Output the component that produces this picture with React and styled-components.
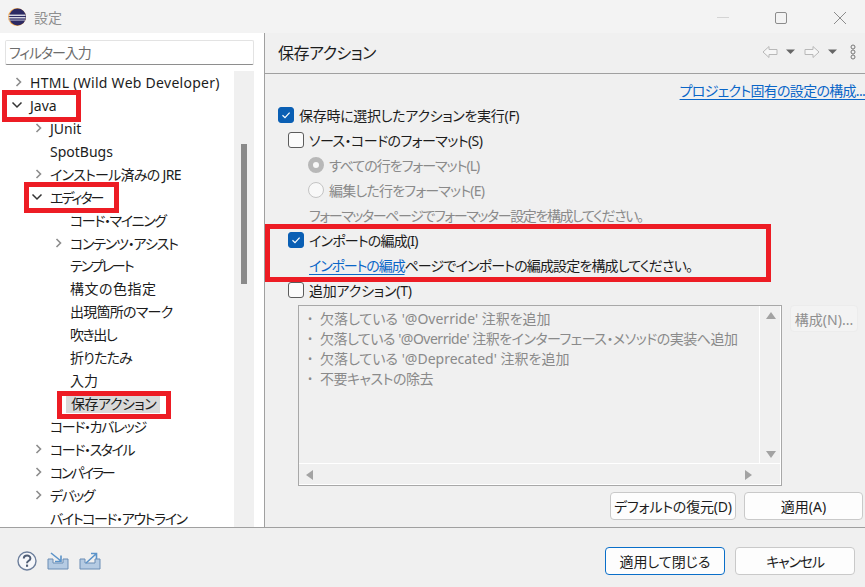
import React from 'react'
import styled, { createGlobalStyle } from 'styled-components'

const GlobalStyle = createGlobalStyle`
  html, body { margin: 0; padding: 0; }
  body {
    width: 865px;
    height: 587px;
    overflow: hidden;
    background: #f0f0f0;
    font-family: "Noto Sans", "Noto Sans CJK JP", sans-serif;
    font-size: 14px;
    font-feature-settings: "palt";
    color: #1c1c1c;
  }
`

const treeItems = [
  { label: 'HTML (Wild Web Developer)', level: 0, arrow: 'right', spacing: 0.28 },
  { label: 'Java', level: 0, arrow: 'down' },
  { label: 'JUnit', level: 1, arrow: 'right' },
  { label: 'SpotBugs', level: 1 },
  { label: 'インストール済みの JRE', level: 1, arrow: 'right', spacing: -0.7 },
  { label: 'エディター', level: 1, arrow: 'down', spacing: -2 },
  { label: 'コード・マイニング', level: 2, spacing: -1.4 },
  { label: 'コンテンツ・アシスト', level: 2, arrow: 'right', spacing: -1.2 },
  { label: 'テンプレート', level: 2, spacing: -2 },
  { label: '構文の色指定', level: 2, spacing: 0.5 },
  { label: '出現箇所のマーク', level: 2, spacing: -0.75 },
  { label: '吹き出し', level: 2, spacing: -1.5 },
  { label: '折りたたみ', level: 2, spacing: -0.8 },
  { label: '入力', level: 2 },
  { label: '保存アクション', level: 2, selected: true, spacing: -0.5 },
  { label: 'コード・カバレッジ', level: 1, spacing: -1.4 },
  { label: 'コード・スタイル', level: 1, arrow: 'right', spacing: -1.4 },
  { label: 'コンパイラー', level: 1, arrow: 'right', spacing: -2.3 },
  { label: 'デバッグ', level: 1, arrow: 'right', spacing: -1.5 },
  { label: 'バイトコード・アウトライン', level: 1, spacing: -1.4 },
]

const actionItems = [
  { text: "欠落している '@Override' 注釈を追加" },
  { text: "欠落している '@Override' 注釈をインターフェース・メソッドの実装へ追加", spacing: -0.5 },
  { text: "欠落している '@Deprecated' 注釈を追加" },
  { text: '不要キャストの除去', spacing: -0.5 },
]

const Window = styled.div`
  position: relative;
  width: 865px;
  height: 587px;
  display: flex;
  flex-direction: column;
  overflow: hidden;
`

const TitleBar = styled.div`
  height: 33px;
  flex: none;
  display: flex;
  align-items: center;
  padding-left: 8px;
  background: #f3f3f3;
`

const TitleText = styled.span`
  margin-left: 8px;
  font-size: 14px;
  color: #8f8f8f;
`

const WindowButtons = styled.div`
  margin-left: auto;
  display: flex;
  align-items: center;
`

const WindowButton = styled.svg`
  width: 58px;
  height: 24px;
  display: block;
`

const Main = styled.div`
  height: 494px;
  flex: none;
  display: flex;
  border-bottom: 1px solid #a0a0a0;
`

const Sidebar = styled.div`
  width: 265px;
  flex: none;
  background: #fff;
  border-right: 1px solid #a0a0a0;
  padding: 7px 10px 0 5px;
  box-sizing: border-box;
  display: flex;
  flex-direction: column;
  overflow: hidden;
`

const Filter = styled.div`
  height: 25px;
  flex: none;
  box-sizing: border-box;
  border: 1px solid #e3e3e3;
  border-bottom: 1px solid #8e8e8e;
  border-radius: 2px;
  padding-left: 3px;
  line-height: 23px;
  letter-spacing: -1.1px;
  color: #6d6d6d;
`

const TreeWrap = styled.div`
  margin-top: 6px;
  flex: 1;
  min-height: 0;
  display: flex;
  margin-left: -5px;
`

const Tree = styled.div`
  width: 234px;
  flex: none;
  overflow: hidden;
`

const TreeRow = styled.div`
  height: 22.95px;
  display: flex;
  align-items: center;
  padding-left: ${p => 11 + p.$level * 20}px;
  white-space: nowrap;
`

const ArrowSlot = styled.span`
  width: 19px;
  height: 14px;
  flex: none;
  display: flex;
  align-items: center;
`

const TreeLabel = styled.span`
  padding: ${p => (p.$selected ? '0 4px 0 5px' : '0')};
  margin-left: ${p => (p.$selected ? '-4px' : '0')};
  background: ${p => (p.$selected ? '#d9d9d9' : 'transparent')};
  letter-spacing: ${p => p.$spacing || 0}px;
  line-height: 19px;
`

const ScrollTrack = styled.div`
  width: 20px;
  flex: none;
  background: #f0f0f0;
  padding-top: 73px;
  display: flex;
  justify-content: center;
`

const ScrollThumb = styled.div`
  width: 6px;
  height: 140px;
  background: #8a8a8a;
`

const Content = styled.div`
  flex: 1;
  min-width: 0;
  display: flex;
  flex-direction: column;
`

const PageHeader = styled.div`
  height: 41px;
  flex: none;
  box-sizing: border-box;
  border-bottom: 1px solid #a0a0a0;
  display: flex;
  align-items: center;
  padding: 0 0 2px 13px;
  font-size: 16px;
  letter-spacing: -0.5px;
`

const NavIcons = styled.svg`
  margin-left: auto;
  width: 102px;
  height: 16px;
  display: block;
`

const LinkRow = styled.div`
  height: 26px;
  display: flex;
  align-items: flex-end;
  justify-content: flex-end;
  white-space: nowrap;
`

const Link = styled.span`
  color: #0a66c8;
  text-decoration: underline;
  text-underline-offset: 3px;
  text-decoration-thickness: 1px;
  letter-spacing: ${p => p.$spacing || 0}px;
`

const Form = styled.div`
  padding: 0 0 0 13px;
  margin-top: 2px;
`

const Row = styled.div`
  height: 25px;
  display: flex;
  align-items: center;
  gap: 5px;
  padding-left: ${p => p.$indent || 0}px;
  white-space: nowrap;
  letter-spacing: ${p => p.$spacing || 0}px;
  color: ${p => (p.$disabled ? '#8a8a8a' : '#1c1c1c')};
`

const Check = styled.span`
  width: 16px;
  height: 16px;
  box-sizing: border-box;
  flex: none;
  border-radius: 3px;
  border: 1px solid ${p => (p.$checked ? '#0a5fb4' : '#5c5c5c')};
  background: ${p => (p.$checked ? '#0a5fb4' : '#fbfbfb')};
  display: flex;
  align-items: center;
  justify-content: center;
`

const Radio = styled.span`
  width: 16px;
  height: 16px;
  box-sizing: border-box;
  flex: none;
  border-radius: 50%;
  border: ${p => (p.$checked ? '5px solid #b8b8b8' : '1px solid #c4c4c4')};
  background: #f8f8f8;
`

const ActionsArea = styled.div`
  display: flex;
  align-items: flex-start;
  gap: 8px;
  margin: 3px 0 0 20px;
`

const ActionsBox = styled.div`
  width: 484px;
  height: 181px;
  box-sizing: border-box;
  border: 1px solid #a8a8a8;
  display: grid;
  grid-template-columns: 1fr 21px;
  grid-template-rows: 1fr 21px;
  box-shadow: inset -1px -1px 0 #fff;
`

const ActionList = styled.ul`
  margin: 0;
  padding: 3px 0 0 9px;
  list-style: none;
  border-right: 1px solid #fff;
  border-bottom: 1px solid #fff;
  color: #8a8a8a;
  overflow: hidden;
`

const ActionItem = styled.li`
  height: 20px;
  line-height: 20px;
  display: flex;
  white-space: nowrap;
  letter-spacing: ${p => p.$spacing || 0}px;
  &::before {
    content: '•';
    width: 12px;
    flex: none;
    font-size: 11px;
  }
`

const VScroll = styled.div`
  display: flex;
  flex-direction: column;
  justify-content: space-between;
  align-items: center;
  padding: 5px 0 4px;
  border-bottom: 1px solid #fff;
`

const HScroll = styled.div`
  display: flex;
  justify-content: space-between;
  align-items: center;
  padding: 0 7px 0 6px;
`

const ScrollGlyph = styled.svg`
  width: 10px;
  height: 10px;
  display: block;
  fill: #a3a3a3;
`

const Button = styled.button`
  box-sizing: border-box;
  height: ${p => p.$height || 28}px;
  width: ${p => p.$width}px;
  flex: none;
  font: inherit;
  font-feature-settings: inherit;
  padding: 0;
  border-radius: 4px;
  letter-spacing: ${p => p.$spacing || 0}px;
  background: ${p => (p.disabled ? '#f3f3f3' : '#fdfdfd')};
  color: ${p => (p.disabled ? '#8f8f8f' : '#1c1c1c')};
  border: 1px solid ${p => (p.$primary ? '#0a6fc9' : p.disabled ? '#ececec' : '#c9c9c9')};
  border-width: ${p => (p.$primary ? '1.5px' : '1px')};
  white-space: nowrap;
`

const RestoreRow = styled.div`
  display: flex;
  justify-content: flex-end;
  gap: 8px;
  margin: 6px 2px 0 0;
`

const Footer = styled.div`
  flex: 1;
  display: flex;
  align-items: center;
  padding: 7px 10px 0 17px;
`

const FooterIcons = styled.div`
  display: flex;
  align-items: center;
  gap: 10px;
`

const FooterButtons = styled.div`
  margin-left: auto;
  display: flex;
  gap: 10px;
`

const Highlight = styled.div`
  position: absolute;
  box-sizing: border-box;
  border: 5px solid #ed1c24;
  pointer-events: none;
  left: ${p => p.$x}px;
  top: ${p => p.$y}px;
  width: ${p => p.$w}px;
  height: ${p => p.$h}px;
`

const Chevron = ({ dir }) => (
  <svg width="12" height="10" viewBox="0 0 12 10">
    {dir === 'down'
      ? <path d="M1.5 2.5 L6 7 L10.5 2.5" fill="none" stroke="#333" strokeWidth="1.5" />
      : <path d="M5.5 1 L9.5 5 L5.5 9" fill="none" stroke="#8c8c8c" strokeWidth="1.6" />}
  </svg>
)

const CheckMark = () => (
  <svg width="10" height="10" viewBox="0 0 10 10">
    <path d="M1.5 5.2 L4 7.6 L8.6 2.6" fill="none" stroke="#fff" strokeWidth="1.2" />
  </svg>
)

const EclipseLogo = () => (
  <svg width="18" height="18" viewBox="0 0 18 18">
    <circle cx="9" cy="9" r="9" fill="#f5a94a" />
    <circle cx="9.6" cy="9" r="8.4" fill="#2c2a63" />
    <rect x="0.5" y="6.6" width="17" height="1.3" fill="#e8e8f0" />
    <rect x="0.5" y="9.1" width="17" height="1.3" fill="#e8e8f0" />
    <rect x="1" y="11.6" width="16" height="1" fill="#b8b8d0" />
  </svg>
)

const HelpIcon = () => (
  <svg width="20" height="20" viewBox="0 0 20 20">
    <circle cx="10" cy="10" r="9" fill="#f6f7fa" stroke="#6d7f9c" strokeWidth="1.4" />
    <path d="M6.8 7.6 C6.8 3.6 13.4 3.6 13.4 7.4 C13.4 9.8 10 9.8 10 12.2" fill="none" stroke="#4f5d75" strokeWidth="2" />
    <rect x="9" y="13.6" width="2.1" height="2.2" fill="#4f5d75" />
  </svg>
)

const TrayIcon = ({ out }) => (
  <svg width="22" height="18" viewBox="0 0 22 18">
    <path d="M1 7 H6 V11 H16 V7 H21 V17 H1 Z" fill="#b5cbe3" stroke="#6b8db5" strokeWidth="1" />
    {out
      ? <path d="M7 11 L17 2 M12 1.5 H17.5 V7" fill="none" stroke="#5b93c9" strokeWidth="1.6" />
      : <path d="M4 1 L14 9 M14 3.5 V9.5 H8" fill="none" stroke="#5b93c9" strokeWidth="1.6" />}
  </svg>
)

const App = () => {
  return (
    <Window>
      <GlobalStyle />
      <TitleBar>
        <EclipseLogo />
        <TitleText>設定</TitleText>
        <WindowButtons>
          <WindowButton viewBox="0 0 58 24">
            <path d="M26 12.5 H38" stroke="#d4d4d4" strokeWidth="1" />
          </WindowButton>
          <WindowButton viewBox="0 0 58 24">
            <rect x="26.5" y="7.5" width="11" height="11" rx="1.5" fill="none" stroke="#8c8c8c" strokeWidth="1" />
          </WindowButton>
          <WindowButton viewBox="0 0 58 24">
            <path d="M27 7 L39 19 M39 7 L27 19" stroke="#8c8c8c" strokeWidth="1" />
          </WindowButton>
        </WindowButtons>
      </TitleBar>

      <Main>
        <Sidebar>
          <Filter>フィルター入力</Filter>
          <TreeWrap>
            <Tree>
              {treeItems.map(item => (
                <TreeRow key={item.label} $level={item.level}>
                  <ArrowSlot>{item.arrow && <Chevron dir={item.arrow} />}</ArrowSlot>
                  <TreeLabel $selected={item.selected} $spacing={item.spacing}>{item.label}</TreeLabel>
                </TreeRow>
              ))}
            </Tree>
            <ScrollTrack><ScrollThumb /></ScrollTrack>
          </TreeWrap>
        </Sidebar>

        <Content>
          <PageHeader>
            保存アクション
            <NavIcons viewBox="0 0 102 16">
              <path d="M0 8 L6 2.5 V5.5 H14 V10.5 H6 V13.5 Z" fill="#f6f6f6" stroke="#b8b8b8" />
              <path d="M23 5.5 H32 L27.5 10 Z" fill="#666" />
              <path d="M56 8 L50 2.5 V5.5 H42 V10.5 H50 V13.5 Z" fill="#f6f6f6" stroke="#b8b8b8" />
              <path d="M65 5.5 H74 L69.5 10 Z" fill="#666" />
              <circle cx="90" cy="3" r="2" fill="none" stroke="#777" />
              <circle cx="90" cy="8" r="2" fill="none" stroke="#777" />
              <circle cx="90" cy="13" r="2" fill="none" stroke="#777" />
            </NavIcons>
          </PageHeader>

          <LinkRow><Link $spacing={-0.7}>プロジェクト固有の設定の構成...</Link></LinkRow>

          <Form>
            <Row $spacing={-0.3}>
              <Check $checked><CheckMark /></Check>
              保存時に選択したアクションを実行(F)
            </Row>
            <Row $indent={10} $spacing={-0.55}>
              <Check />
              ソース・コードのフォーマット(S)
            </Row>
            <Row $indent={30} $disabled $spacing={-1}>
              <Radio $checked />
              すべての行をフォーマット(L)
            </Row>
            <Row $indent={30} $disabled $spacing={-0.8}>
              <Radio />
              編集した行をフォーマット(E)
            </Row>
            <Row $indent={31} $disabled $spacing={-1.4}>
              フォーマッターページでフォーマッター設定を構成してください。
            </Row>
            <Row $indent={10} $spacing={-0.8}>
              <Check $checked><CheckMark /></Check>
              インポートの編成(I)
            </Row>
            <Row $indent={31} $spacing={-0.85}>
              <span><Link $spacing={-1.1}>インポートの編成</Link>ページでインポートの編成設定を構成してください。</span>
            </Row>
            <Row $indent={10} $spacing={-0.2}>
              <Check />
              追加アクション(T)
            </Row>

            <ActionsArea>
              <ActionsBox>
                <ActionList>
                  {actionItems.map(item => (
                    <ActionItem key={item.text} $spacing={item.spacing}>{item.text}</ActionItem>
                  ))}
                </ActionList>
                <VScroll>
                  <ScrollGlyph viewBox="0 0 10 10"><path d="M0 8 L5 1 L10 8 Z" /></ScrollGlyph>
                  <ScrollGlyph viewBox="0 0 10 10"><path d="M0 2 L5 9 L10 2 Z" /></ScrollGlyph>
                </VScroll>
                <HScroll>
                  <ScrollGlyph viewBox="0 0 10 10"><path d="M8 0 L1 5 L8 10 Z" /></ScrollGlyph>
                  <ScrollGlyph viewBox="0 0 10 10"><path d="M2 0 L9 5 L2 10 Z" /></ScrollGlyph>
                </HScroll>
                <div />
              </ActionsBox>
              <Button disabled $width={68} $height={27}>構成(N)...</Button>
            </ActionsArea>

            <RestoreRow>
              <Button $width={126} $spacing={-0.2}>デフォルトの復元(D)</Button>
              <Button $width={119}>適用(A)</Button>
            </RestoreRow>
          </Form>
        </Content>
      </Main>

      <Footer>
        <FooterIcons>
          <HelpIcon />
          <TrayIcon />
          <TrayIcon out />
        </FooterIcons>
        <FooterButtons>
          <Button $primary $width={120}>適用して閉じる</Button>
          <Button $width={120} $spacing={-1.2}>キャンセル</Button>
        </FooterButtons>
      </Footer>

      <Highlight $x={2} $y={90} $w={79} $h={32} />
      <Highlight $x={24} $y={182} $w={95} $h={31} />
      <Highlight $x={57} $y={391} $w={114} $h={28} />
      <Highlight $x={265} $y={224} $w={506} $h={58} />
    </Window>
  )
}

export default App
